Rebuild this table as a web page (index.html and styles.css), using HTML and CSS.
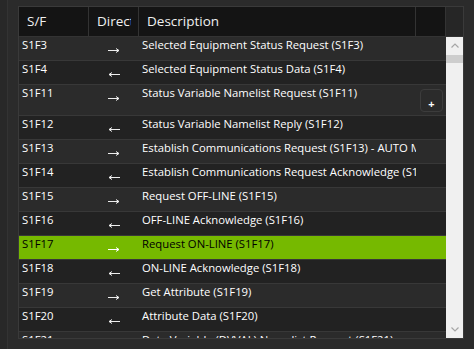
FILE: index.html
```
<!DOCTYPE html>
<html>
<head>
<meta charset="utf-8">
<link rel="stylesheet" href="styles.css">
</head>
<body>
<div class="app">
  <div class="side"></div>
  <div class="grid">
    <div class="hdr">
      <div class="hc c-sf"><span>S/F</span></div>
      <div class="hc c-dir"><span>Direction</span></div>
      <div class="hc c-desc"><span>Description</span></div>
      <div class="hc c-blank"></div>
      <div class="hc c-corner"></div>
    </div>
    <div class="bodywrap">
      <div class="rows">
        <div class="row even"><div class="c-sf">S1F3</div><div class="c-dir"><svg class="arr" width="12" height="7" viewBox="0 0 12 7"><path d="M0 3.5H11M8 1.5L11 3.5L8 5.5" fill="none" stroke="#ededed" stroke-width="1"/></svg></div><div class="c-d">Selected Equipment Status Request (S1F3)</div></div>
        <div class="row odd"><div class="c-sf">S1F4</div><div class="c-dir"><svg class="arr" width="12" height="7" viewBox="0 0 12 7"><path d="M12 3.5H1M4 1.5L1 3.5L4 5.5" fill="none" stroke="#ededed" stroke-width="1"/></svg></div><div class="c-d">Selected Equipment Status Data (S1F4)</div></div>
        <div class="row even tall"><div class="c-sf">S1F11</div><div class="c-dir"><svg class="arr" width="12" height="7" viewBox="0 0 12 7"><path d="M0 3.5H11M8 1.5L11 3.5L8 5.5" fill="none" stroke="#ededed" stroke-width="1"/></svg></div><div class="c-d">Status Variable Namelist Request (S1F11)</div><div class="c-x"><div class="plus">+</div></div></div>
        <div class="row odd"><div class="c-sf">S1F12</div><div class="c-dir"><svg class="arr" width="12" height="7" viewBox="0 0 12 7"><path d="M12 3.5H1M4 1.5L1 3.5L4 5.5" fill="none" stroke="#ededed" stroke-width="1"/></svg></div><div class="c-d">Status Variable Namelist Reply (S1F12)</div></div>
        <div class="row even"><div class="c-sf">S1F13</div><div class="c-dir"><svg class="arr" width="12" height="7" viewBox="0 0 12 7"><path d="M0 3.5H11M8 1.5L11 3.5L8 5.5" fill="none" stroke="#ededed" stroke-width="1"/></svg></div><div class="c-d">Establish Communications Request (S1F13) - AUTO MODE</div></div>
        <div class="row odd"><div class="c-sf">S1F14</div><div class="c-dir"><svg class="arr" width="12" height="7" viewBox="0 0 12 7"><path d="M12 3.5H1M4 1.5L1 3.5L4 5.5" fill="none" stroke="#ededed" stroke-width="1"/></svg></div><div class="c-d">Establish Communications Request Acknowledge (S1F14)</div></div>
        <div class="row even"><div class="c-sf">S1F15</div><div class="c-dir"><svg class="arr" width="12" height="7" viewBox="0 0 12 7"><path d="M0 3.5H11M8 1.5L11 3.5L8 5.5" fill="none" stroke="#ededed" stroke-width="1"/></svg></div><div class="c-d">Request OFF-LINE (S1F15)</div></div>
        <div class="row odd"><div class="c-sf">S1F16</div><div class="c-dir"><svg class="arr" width="12" height="7" viewBox="0 0 12 7"><path d="M12 3.5H1M4 1.5L1 3.5L4 5.5" fill="none" stroke="#ededed" stroke-width="1"/></svg></div><div class="c-d">OFF-LINE Acknowledge (S1F16)</div></div>
        <div class="row sel"><div class="c-sf">S1F17</div><div class="c-dir"><svg class="arr" width="12" height="7" viewBox="0 0 12 7"><path d="M0 3.5H11M8 1.5L11 3.5L8 5.5" fill="none" stroke="#ffffff" stroke-width="1"/></svg></div><div class="c-d">Request ON-LINE (S1F17)</div></div>
        <div class="row odd"><div class="c-sf">S1F18</div><div class="c-dir"><svg class="arr" width="12" height="7" viewBox="0 0 12 7"><path d="M12 3.5H1M4 1.5L1 3.5L4 5.5" fill="none" stroke="#ededed" stroke-width="1"/></svg></div><div class="c-d">ON-LINE Acknowledge (S1F18)</div></div>
        <div class="row even"><div class="c-sf">S1F19</div><div class="c-dir"><svg class="arr" width="12" height="7" viewBox="0 0 12 7"><path d="M0 3.5H11M8 1.5L11 3.5L8 5.5" fill="none" stroke="#ededed" stroke-width="1"/></svg></div><div class="c-d">Get Attribute (S1F19)</div></div>
        <div class="row odd"><div class="c-sf">S1F20</div><div class="c-dir"><svg class="arr" width="12" height="7" viewBox="0 0 12 7"><path d="M12 3.5H1M4 1.5L1 3.5L4 5.5" fill="none" stroke="#ededed" stroke-width="1"/></svg></div><div class="c-d">Attribute Data (S1F20)</div></div>
        <div class="row even"><div class="c-sf">S1F21</div><div class="c-dir"><svg class="arr" width="12" height="7" viewBox="0 0 12 7"><path d="M0 3.5H11M8 1.5L11 3.5L8 5.5" fill="none" stroke="#ededed" stroke-width="1"/></svg></div><div class="c-d">Data Variable (DVVAL) Namelist Request (S1F21)</div></div>
      </div>
      <div class="scroll">
        <svg class="chev" width="8" height="5" viewBox="0 0 8 5"><path d="M0.5 4.5L4 1L7.5 4.5" fill="none" stroke="#a6a6a6" stroke-width="1.2"/></svg>
        <div class="thumb"></div>
        <div class="track"></div>
        <svg class="chev" width="8" height="5" viewBox="0 0 8 5"><path d="M0.5 0.5L4 4L7.5 0.5" fill="none" stroke="#a6a6a6" stroke-width="1.2"/></svg>
      </div>
    </div>
  </div>
</div>
</body>
</html>
```

FILE: styles.css
```
* { box-sizing: border-box; }
html, body { margin: 0; padding: 0; }
body {
  width: 474px;
  height: 349px;
  overflow: hidden;
  background: #2b2b2b;
  font-family: "Open Sans", "Noto Sans", sans-serif;
  color: #ffffff;
}
.app {
  display: flex;
  height: 349px;
}
.side {
  width: 8px;
  background: #282828;
  border-right: 1px solid #333333;
}
.grid {
  margin: 6px 0 0 10px;
  width: 446px;
  height: 333px;
  border: 1px solid #3a3a3a;
  display: flex;
  flex-direction: column;
  overflow: hidden;
}
.hdr {
  display: flex;
  height: 30px;
  flex: none;
  background: #141414;
  border-bottom: 1px solid #333333;
}
.hc {
  font-size: 13.5px;
  line-height: 29px;
  padding-left: 8px;
  color: #f0f0f0;
  border-right: 1px solid #333333;
  white-space: nowrap;
}
.hc span {
  display: block;
  overflow: hidden;
}
.hdr .c-sf { width: 70px; }
.hdr .c-dir { width: 50px; }
.hdr .c-dir span { width: 34px; }
.hdr .c-desc { width: 277px; }
.hdr .c-blank { width: 30px; }
.hdr .c-corner { width: 17px; background: #262626; border-right: none; }
.bodywrap {
  flex: 1;
  display: flex;
  min-height: 0;
}
.rows {
  width: 427px;
  display: flex;
  flex-direction: column;
  overflow: hidden;
}
.row {
  display: flex;
  height: 24px;
  flex: none;
  border-bottom: 1px solid #383838;
  font-size: 11.3px;
  line-height: 16px;
  white-space: nowrap;
}
.row.tall { height: 31px; }
.even { background: #2b2b2b; }
.odd { background: #222222; }
.sel { background: #76b900; color: #000000; }
.row .c-sf { width: 70px; padding: 0 0 0 3px; }
.row .c-dir {
  width: 50px;
  display: flex;
  justify-content: center;
  align-items: flex-start;
  padding-top: 10px;
}
.row .c-d {
  width: 277px;
  flex: none;
  padding: 0 0 0 3px;
  overflow: hidden;
}
.row .c-x {
  flex: 1;
  display: flex;
  justify-content: flex-end;
}
.arr { display: block; }
.plus {
  flex: none;
  width: 23px;
  height: 23px;
  margin: 4px 3px 0 0;
  border: 1px solid #3c3c3c;
  border-radius: 4px;
  text-align: center;
  font-size: 11px;
  line-height: 11px;
  padding-top: 8px;
  color: #ffffff;
  font-weight: bold;
}
.scroll {
  width: 17px;
  background: #f0f0f0;
  display: flex;
  flex-direction: column;
  align-items: center;
}
.chev { display: block; flex: none; }
.scroll .chev:first-child { margin-top: 6px; }
.scroll .chev:last-child { margin-bottom: 6px; }
.thumb {
  align-self: stretch;
  height: 8px;
  margin-top: 7px;
  background: #cdcdcd;
}
.track { flex: 1; }
```
